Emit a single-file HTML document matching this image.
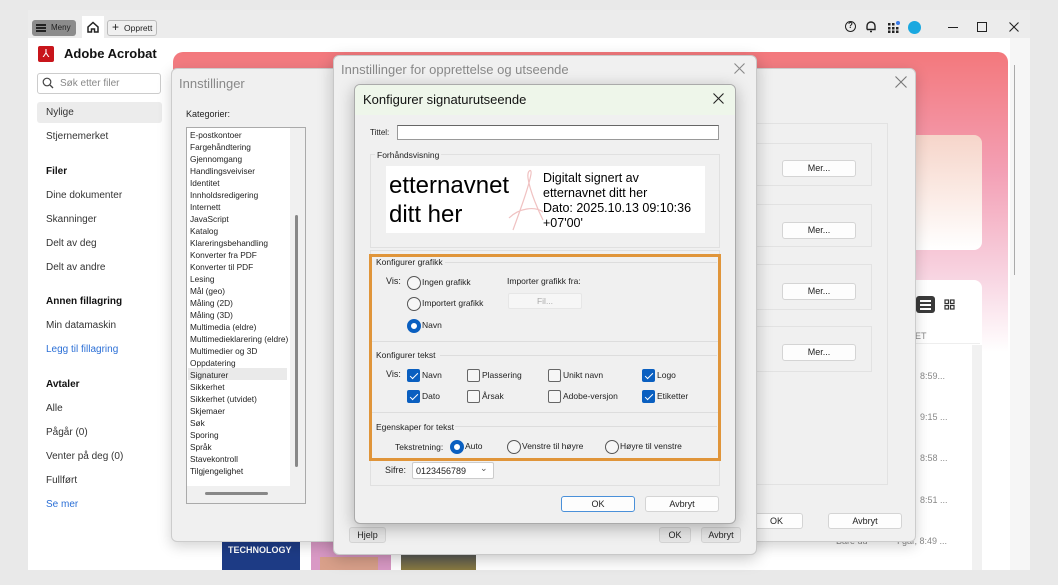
<!DOCTYPE html>
<html><head><meta charset="utf-8"><style>
*{margin:0;padding:0;box-sizing:border-box}
body{width:1058px;height:585px;background:#e9e9e9;position:relative;overflow:hidden;font-family:"Liberation Sans",sans-serif;color:#222}
.a{position:absolute}
.t{position:absolute;white-space:nowrap}
.btn{position:absolute;background:#fdfdfd;border:1px solid #d4d4d4;border-radius:3px;font-size:9px;text-align:center;color:#222}
.rad{position:absolute;width:14px;height:14px;border:1px solid #555;border-radius:50%;background:#f6f6f6}
.rad.on{border:4px solid #0a5fc0;background:#fff}
.cb{position:absolute;width:13px;height:13px;border:1px solid #666;border-radius:2px;background:#f6f6f6}
.cb.on{background:#0a5fc0;border-color:#0a5fc0}
.cb.on:after{content:"";position:absolute;left:4px;top:1px;width:3px;height:7px;border:solid #fff;border-width:0 1px 1px 0;transform:rotate(45deg)}
.s9{font-size:9px}
.side{font-size:10px;color:#333}
</style></head><body>
<!-- top bar -->
<div class="a" style="left:28px;top:10px;width:1002px;height:28px;background:#ececec"></div>
<div class="a" style="left:32px;top:20px;width:44px;height:16px;background:#8c8c8c;border-radius:3px"></div>
<div class="a" style="left:36px;top:24px;width:10px;height:1.5px;background:#222;box-shadow:0 3px 0 #222,0 6px 0 #222"></div>
<div class="t" style="left:51px;top:23px;font-size:8px;color:#222">Meny</div>
<div class="a" style="left:82px;top:16px;width:22px;height:22px;background:#fff"></div>
<svg class="a" style="left:86px;top:20px" width="14" height="14" viewBox="0 0 14 14"><path d="M2 7L7 2.5L12 7V12H8.5V9H5.5V12H2Z" fill="none" stroke="#222" stroke-width="1.5"/></svg>
<div class="a" style="left:107px;top:20px;width:50px;height:16px;border:1px solid #bbb;border-radius:3px;background:#f0f0f0"></div>
<div class="t" style="left:112px;top:20px;font-size:12px">+</div>
<div class="t" style="left:124px;top:23px;font-size:8.5px">Opprett</div>
<div class="a" style="left:845px;top:21px;width:11px;height:11px;border:1.5px solid #222;border-radius:50%;font-size:8px;font-weight:bold;text-align:center;line-height:8px">?</div>
<svg class="a" style="left:865px;top:20px" width="12" height="13" viewBox="0 0 12 13"><path d="M2 9.5V6a4 4 0 0 1 8 0v3.5H2M5 11.5h2" fill="none" stroke="#222" stroke-width="1.4"/></svg>
<svg class="a" style="left:888px;top:21px" width="12" height="12" viewBox="0 0 12 12"><g fill="#222"><rect x="0" y="2" width="2.5" height="2.5"/><rect x="4" y="2" width="2.5" height="2.5"/><rect x="0" y="6" width="2.5" height="2.5"/><rect x="4" y="6" width="2.5" height="2.5"/><rect x="8" y="6" width="2.5" height="2.5"/><rect x="0" y="9.5" width="2.5" height="2.5"/><rect x="4" y="9.5" width="2.5" height="2.5"/><rect x="8" y="9.5" width="2.5" height="2.5"/></g><circle cx="10" cy="2" r="2" fill="#3a7be8"/></svg>
<div class="a" style="left:908px;top:21px;width:13px;height:13px;border-radius:50%;background:#1aa8e0"></div>
<div class="a" style="left:948px;top:27px;width:10px;height:1px;background:#222"></div>
<div class="a" style="left:977px;top:22px;width:10px;height:10px;border:1px solid #222"></div>
<svg class="a" style="left:1009px;top:22px" width="10" height="10" viewBox="0 0 10 10"><path d="M0.5 0.5L9.5 9.5M9.5 0.5L0.5 9.5" stroke="#222" stroke-width="1.1"/></svg>

<!-- app white area -->
<div class="a" style="left:28px;top:38px;width:982px;height:532px;background:#fff"></div>
<div class="a" style="left:1010px;top:38px;width:20px;height:532px;background:#f6f6f6"></div>
<div class="a" style="left:1014px;top:65px;width:1px;height:210px;background:#aaa"></div>

<!-- sidebar -->
<div class="a" style="left:38px;top:46px;width:16px;height:16px;background:#c8151b;border-radius:2px;color:#fff;font-size:11px;text-align:center;line-height:16px">⅄</div>
<div class="t" style="left:64px;top:46px;font-size:13px;font-weight:bold;color:#111">Adobe Acrobat</div>
<div class="a" style="left:37px;top:73px;width:124px;height:21px;border:1px solid #ccc;border-radius:3px"></div>
<svg class="a" style="left:42px;top:77px" width="12" height="12" viewBox="0 0 12 12"><circle cx="5" cy="5" r="3.8" fill="none" stroke="#444" stroke-width="1.2"/><path d="M8 8l3 3" stroke="#444" stroke-width="1.3"/></svg>
<div class="t side" style="left:60px;top:78px;color:#888">Søk etter filer</div>
<div class="a" style="left:37px;top:102px;width:125px;height:21px;background:#ececec;border-radius:3px"></div>
<div class="t side" style="left:46px;top:107px">Nylige</div>
<div class="t side" style="left:46px;top:131px">Stjernemerket</div>
<div class="t side" style="left:46px;top:166px;font-weight:bold;color:#111">Filer</div>
<div class="t side" style="left:46px;top:190px">Dine dokumenter</div>
<div class="t side" style="left:46px;top:214px">Skanninger</div>
<div class="t side" style="left:46px;top:238px">Delt av deg</div>
<div class="t side" style="left:46px;top:262px">Delt av andre</div>
<div class="t side" style="left:46px;top:296px;font-weight:bold;color:#111">Annen fillagring</div>
<div class="t side" style="left:46px;top:320px">Min datamaskin</div>
<div class="t side" style="left:46px;top:344px;color:#2b6fd6">Legg til fillagring</div>
<div class="t side" style="left:46px;top:379px;font-weight:bold;color:#111">Avtaler</div>
<div class="t side" style="left:46px;top:403px">Alle</div>
<div class="t side" style="left:46px;top:427px">Pågår (0)</div>
<div class="t side" style="left:46px;top:451px">Venter på deg (0)</div>
<div class="t side" style="left:46px;top:475px">Fullført</div>
<div class="t side" style="left:46px;top:499px;color:#2b6fd6">Se mer</div>

<!-- pink banner -->
<div class="a" style="left:173px;top:52px;width:835px;height:300px;border-radius:10px 10px 0 0;background:linear-gradient(180deg,#f3787c 0%,#f3a0b5 40%,#f8d5e2 75%,#fff 100%)"></div>
<div class="a" style="left:900px;top:135px;width:82px;height:115px;border-radius:8px;background:linear-gradient(180deg,#f6d5ca,#fbeae4 50%,#fff)"></div>
<div class="a" style="left:880px;top:280px;width:102px;height:290px;border-radius:8px 8px 0 0;background:#fff"></div>
<div class="a" style="left:916px;top:296px;width:19px;height:17px;background:#3a3a3a;border-radius:3px"></div>
<div class="a" style="left:920px;top:300px;width:11px;height:1.5px;background:#fff;box-shadow:0 4px 0 #fff,0 8px 0 #fff"></div>
<svg class="a" style="left:944px;top:299px" width="11" height="11" viewBox="0 0 11 11"><g fill="none" stroke="#333" stroke-width="1.2"><rect x="1" y="1" width="3.5" height="3.5"/><rect x="6.5" y="1" width="3.5" height="3.5"/><rect x="1" y="6.5" width="3.5" height="3.5"/><rect x="6.5" y="6.5" width="3.5" height="3.5"/></g></svg>
<div class="t" style="left:915px;top:331px;font-size:9px;color:#888">ET</div>
<div class="a" style="left:880px;top:343px;width:100px;height:1px;background:#eee"></div>
<div class="a" style="left:972px;top:345px;width:10px;height:225px;background:#f1f1f1"></div>
<div class="t" style="left:920px;top:371px;font-size:9px;color:#888">8:59...</div>
<div class="t" style="left:920px;top:412px;font-size:9px;color:#888">9:15 ...</div>
<div class="t" style="left:920px;top:453px;font-size:9px;color:#888">8:58 ...</div>
<div class="t" style="left:920px;top:495px;font-size:9px;color:#888">8:51 ...</div>
<div class="t" style="left:897px;top:536px;font-size:9px;color:#888">I går, 8:49 ...</div>
<div class="t" style="left:836px;top:536px;font-size:9px;color:#888">Bare du</div>
<!-- thumbnails -->
<div class="a" style="left:222px;top:541px;width:78px;height:29px;background:#1d3b85"></div>
<div class="t" style="left:228px;top:545px;font-size:9px;font-weight:bold;color:#fff">TECHNOLOGY</div>
<div class="a" style="left:311px;top:541px;width:80px;height:29px;background:#d999c5"></div>
<div class="a" style="left:320px;top:557px;width:58px;height:13px;background:#d9a08a"></div>
<div class="a" style="left:401px;top:541px;width:75px;height:29px;background:linear-gradient(180deg,#2a3c6a,#8a7a40)"></div>

<!-- Innstillinger dialog -->
<div class="a" style="left:171px;top:68px;width:745px;height:474px;background:#f0f0f0;border:1px solid #ccc;border-radius:6px;box-shadow:0 4px 14px rgba(0,0,0,.18)"></div>
<div class="t" style="left:179px;top:76px;font-size:13px;color:#888">Innstillinger</div>
<svg class="a" style="left:895px;top:76px" width="12" height="12" viewBox="0 0 12 12"><path d="M0.5 0.5L11.5 11.5M11.5 0.5L0.5 11.5" stroke="#777" stroke-width="1.1"/></svg>
<div class="t s9" style="left:186px;top:109px">Kategorier:</div>
<div class="a" style="left:186px;top:127px;width:120px;height:377px;background:#fff;border:1px solid #aaa"></div>
<div class="a" style="left:290px;top:128px;width:15px;height:375px;background:#f0f0f0"></div>
<div class="a" style="left:187px;top:486px;width:118px;height:17px;background:#f0f0f0"></div>
<div class="a" style="left:295px;top:215px;width:3px;height:252px;background:#888;border-radius:2px"></div>
<div class="a" style="left:205px;top:492px;width:63px;height:3px;background:#888;border-radius:2px"></div>
<div class="a" style="left:188px;top:368px;width:99px;height:12px;background:#eaeaea"></div>
<div class="a" style="left:190px;top:129px;font-size:8.3px;line-height:12px;color:#222">E-postkontoer<br>Fargehåndtering<br>Gjennomgang<br>Handlingsveiviser<br>Identitet<br>Innholdsredigering<br>Internett<br>JavaScript<br>Katalog<br>Klareringsbehandling<br>Konverter fra PDF<br>Konverter til PDF<br>Lesing<br>Mål (geo)<br>Måling (2D)<br>Måling (3D)<br>Multimedia (eldre)<br>Multimedieklarering (eldre)<br>Multimedier og 3D<br>Oppdatering<br>Signaturer<br>Sikkerhet<br>Sikkerhet (utvidet)<br>Skjemaer<br>Søk<br>Sporing<br>Språk<br>Stavekontroll<br>Tilgjengelighet</div>
<div class="a" style="left:750px;top:123px;width:138px;height:362px;border:1px solid #e2e2e2"></div>
<div class="a" style="left:750px;top:143px;width:122px;height:43px;border:1px solid #e2e2e2"></div>
<div class="a" style="left:750px;top:204px;width:122px;height:43px;border:1px solid #e2e2e2"></div>
<div class="a" style="left:750px;top:264px;width:122px;height:46px;border:1px solid #e2e2e2"></div>
<div class="a" style="left:750px;top:326px;width:122px;height:46px;border:1px solid #e2e2e2"></div>
<div class="btn" style="left:782px;top:160px;width:74px;height:17px;line-height:15px">Mer...</div>
<div class="btn" style="left:782px;top:222px;width:74px;height:17px;line-height:15px">Mer...</div>
<div class="btn" style="left:782px;top:283px;width:74px;height:17px;line-height:15px">Mer...</div>
<div class="btn" style="left:782px;top:344px;width:74px;height:17px;line-height:15px">Mer...</div>
<div class="btn" style="left:750px;top:513px;width:53px;height:16px;line-height:14px">OK</div>
<div class="btn" style="left:828px;top:513px;width:74px;height:16px;line-height:14px">Avbryt</div>

<!-- middle dialog -->
<div class="a" style="left:333px;top:55px;width:424px;height:500px;background:#f0f0f0;border:1px solid #c8c8c8;border-radius:6px;box-shadow:0 4px 16px rgba(0,0,0,.22)"></div>
<div class="t" style="left:341px;top:62px;font-size:13px;color:#888">Innstillinger for opprettelse og utseende</div>
<svg class="a" style="left:734px;top:63px" width="11" height="11" viewBox="0 0 11 11"><path d="M0.5 0.5L10.5 10.5M10.5 0.5L0.5 10.5" stroke="#888" stroke-width="1.1"/></svg>
<div class="btn" style="left:349px;top:527px;width:37px;height:16px;line-height:14px;background:#e6e6e6">Hjelp</div>
<div class="btn" style="left:659px;top:527px;width:32px;height:16px;line-height:14px;background:#e6e6e6">OK</div>
<div class="btn" style="left:701px;top:527px;width:40px;height:16px;line-height:14px;background:#e6e6e6">Avbryt</div>

<!-- front dialog -->
<div class="a" style="left:354px;top:84px;width:382px;height:440px;background:#f0f0f0;border:1px solid #aaa;border-radius:6px;box-shadow:0 4px 16px rgba(0,0,0,.28);overflow:hidden">
<div style="height:30px;background:#eef6ea"></div></div>
<div class="t" style="left:363px;top:92px;font-size:13px;color:#111">Konfigurer signaturutseende</div>
<svg class="a" style="left:713px;top:93px" width="11" height="11" viewBox="0 0 11 11"><path d="M0.5 0.5L10.5 10.5M10.5 0.5L0.5 10.5" stroke="#222" stroke-width="1.1"/></svg>
<div class="t" style="left:370px;top:128px;font-size:8px">Tittel:</div>
<div class="a" style="left:397px;top:125px;width:322px;height:15px;background:#fff;border:1px solid #999;border-top-color:#666"></div>
<div class="a" style="left:370px;top:154px;width:350px;height:94px;border:1px solid #e0e0e0"></div>
<div class="t" style="left:375px;top:150px;font-size:8.5px;background:#f0f0f0;padding:0 2px">Forhåndsvisning</div>
<div class="a" style="left:386px;top:166px;width:319px;height:67px;background:#fff"></div>
<svg class="a" style="left:505px;top:168px" width="40" height="65" viewBox="0 0 40 65"><path d="M8 62C16 40 24 18 26 6C27 0 22 2 23 10C25 24 34 44 38 52M4 50C14 40 30 38 38 44" fill="none" stroke="#f0c2c2" stroke-width="1.2"/></svg>
<div class="t" style="left:389px;top:171px;font-size:24px;color:#000;line-height:29px">etternavnet<br>ditt her</div>
<div class="t" style="left:543px;top:171px;font-size:12.5px;color:#000;line-height:15px">Digitalt signert av<br>etternavnet ditt her<br>Dato: 2025.10.13 09:10:36<br>+07'00'</div>
<!-- group below -->
<div class="a" style="left:370px;top:250px;width:350px;height:236px;border:1px solid #e0e0e0"></div>
<div class="t" style="left:385px;top:465px;font-size:9px">Sifre:</div>
<div class="a" style="left:412px;top:462px;width:82px;height:17px;background:#fff;border:1px solid #ccc;border-radius:2px"></div>
<div class="t s9" style="left:416px;top:466px">0123456789</div>
<div class="t" style="left:480px;top:463px;font-size:9px;color:#555">⌄</div>
<!-- orange box -->
<div class="a" style="left:369px;top:254px;width:352px;height:207px;border:3px solid #e0953a"></div>
<div class="t" style="left:376px;top:257px;font-size:8.5px">Konfigurer grafikk</div>
<div class="a" style="left:445px;top:262px;width:272px;height:1px;background:#ddd"></div>
<div class="t s9" style="left:386px;top:276px">Vis:</div>
<div class="rad" style="left:407px;top:276px"></div><div class="t" style="left:422px;top:277px;font-size:8.5px">Ingen grafikk</div>
<div class="rad" style="left:407px;top:297px"></div><div class="t" style="left:422px;top:298px;font-size:8.5px">Importert grafikk</div>
<div class="rad on" style="left:407px;top:319px"></div><div class="t" style="left:422px;top:320px;font-size:8.5px">Navn</div>
<div class="t" style="left:507px;top:276px;font-size:8.5px">Importer grafikk fra:</div>
<div class="a" style="left:508px;top:293px;width:74px;height:16px;background:#f6f6f6;border:1px solid #e6e6e6;border-radius:2px;font-size:8.5px;color:#aaa;text-align:center;line-height:14px">Fil...</div>
<div class="a" style="left:372px;top:341px;width:346px;height:1px;background:#ddd"></div>
<div class="t" style="left:376px;top:350px;font-size:8.5px">Konfigurer tekst</div>
<div class="a" style="left:440px;top:355px;width:277px;height:1px;background:#ddd"></div>
<div class="t s9" style="left:386px;top:369px">Vis:</div>
<div class="cb on" style="left:407px;top:369px"></div><div class="t" style="left:422px;top:370px;font-size:8.5px">Navn</div>
<div class="cb" style="left:467px;top:369px"></div><div class="t" style="left:482px;top:370px;font-size:8.5px">Plassering</div>
<div class="cb" style="left:548px;top:369px"></div><div class="t" style="left:563px;top:370px;font-size:8.5px">Unikt navn</div>
<div class="cb on" style="left:642px;top:369px"></div><div class="t" style="left:657px;top:370px;font-size:8.5px">Logo</div>
<div class="cb on" style="left:407px;top:390px"></div><div class="t" style="left:422px;top:391px;font-size:8.5px">Dato</div>
<div class="cb" style="left:467px;top:390px"></div><div class="t" style="left:482px;top:391px;font-size:8.5px">Årsak</div>
<div class="cb" style="left:548px;top:390px"></div><div class="t" style="left:563px;top:391px;font-size:8.5px">Adobe-versjon</div>
<div class="cb on" style="left:642px;top:390px"></div><div class="t" style="left:657px;top:391px;font-size:8.5px">Etiketter</div>
<div class="a" style="left:372px;top:412px;width:346px;height:1px;background:#ddd"></div>
<div class="t" style="left:376px;top:422px;font-size:8.5px">Egenskaper for tekst</div>
<div class="a" style="left:455px;top:426px;width:262px;height:1px;background:#ddd"></div>
<div class="t" style="left:395px;top:442px;font-size:8.5px">Tekstretning:</div>
<div class="rad on" style="left:450px;top:440px"></div><div class="t" style="left:465px;top:441px;font-size:8.5px">Auto</div>
<div class="rad" style="left:507px;top:440px"></div><div class="t" style="left:522px;top:441px;font-size:8.5px">Venstre til høyre</div>
<div class="rad" style="left:605px;top:440px"></div><div class="t" style="left:620px;top:441px;font-size:8.5px">Høyre til venstre</div>
<div class="btn" style="left:561px;top:496px;width:74px;height:16px;line-height:14px;border-color:#4a90d9">OK</div>
<div class="btn" style="left:645px;top:496px;width:74px;height:16px;line-height:14px">Avbryt</div>
</body></html>
